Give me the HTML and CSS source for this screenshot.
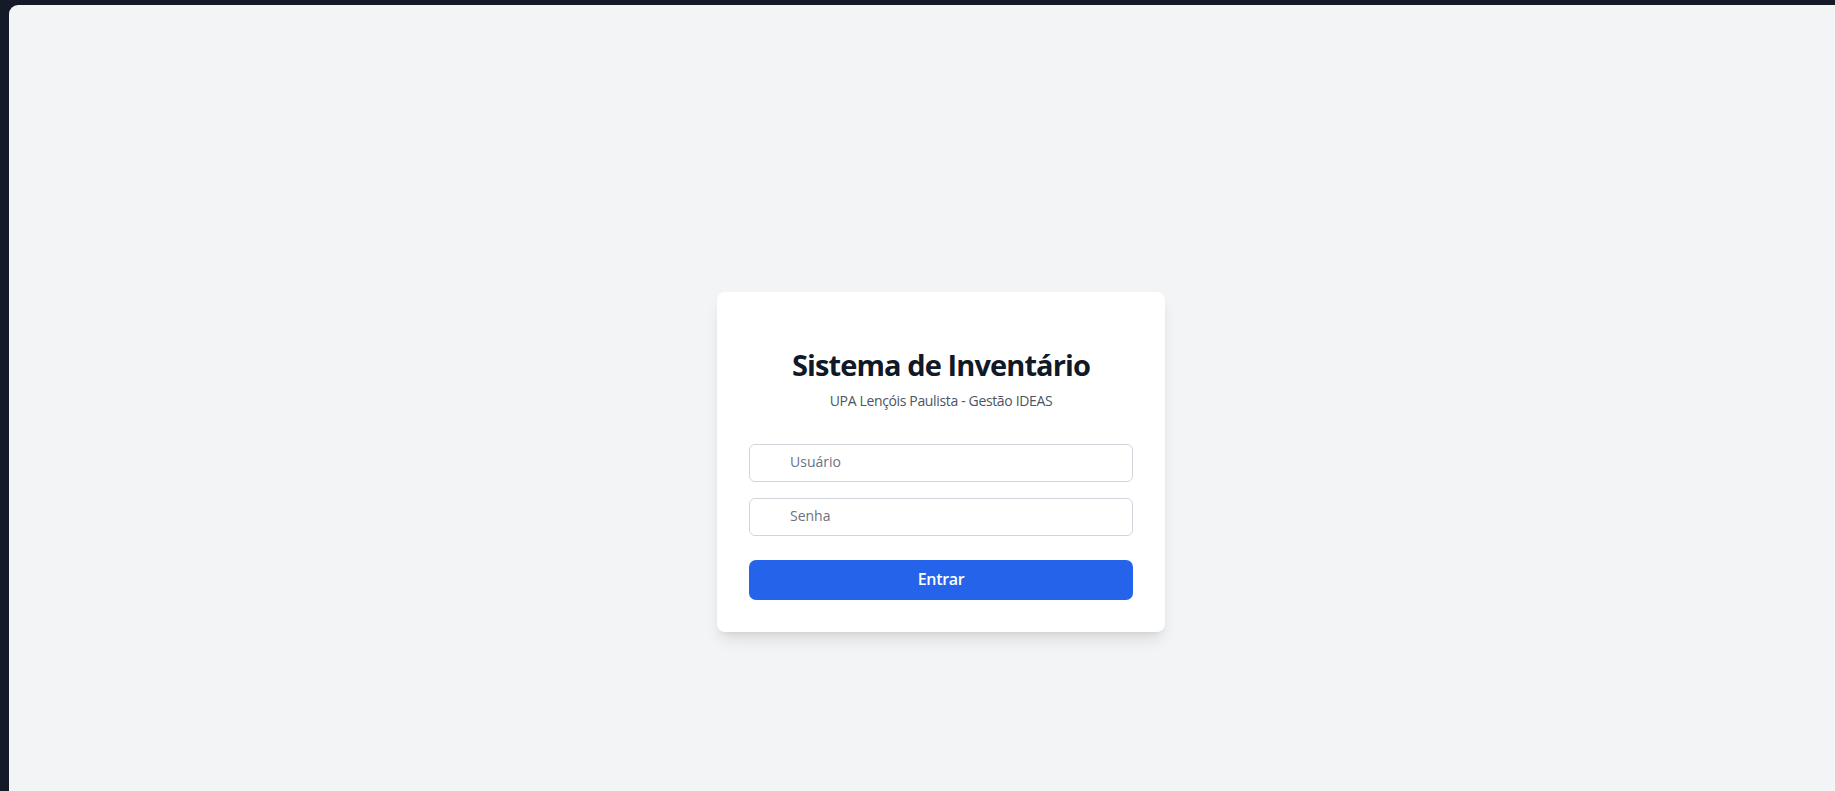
FILE: index.html
```html
<!DOCTYPE html>
<html lang="pt-BR">
<head>
<meta charset="utf-8">
<title>Sistema de Inventário</title>
<link rel="stylesheet" href="styles.css">
</head>
<body>
<div class="frame">
  <main class="panel">
    <div class="card">
      <header class="card-header">
        <h1 class="title">Sistema de Inventário</h1>
        <p class="subtitle">UPA Lençóis Paulista - Gestão IDEAS</p>
      </header>
      <form class="form">
        <div class="field"><input class="input" type="text" placeholder="Usuário"></div>
        <div class="field"><input class="input" type="password" placeholder="Senha"></div>
        <button class="btn" type="button">Entrar</button>
      </form>
    </div>
  </main>
</div>
</body>
</html>
```
FILE: styles.css
```css
* { box-sizing: border-box; }
html, body { margin: 0; padding: 0; }
body {
  background: #151a28;
  font-family: "Open Sans", "Noto Sans", sans-serif;
  overflow: hidden;
}
.frame {
  width: 1835px;
  height: 791px;
  padding: 5px 0 0 9px;
}
.panel {
  background: #f3f4f6;
  height: 786px;
  border-top-left-radius: 9px;
  padding: 287px 0 0 708px;
}
.card {
  width: 448px;
  background: #ffffff;
  border-radius: 8px;
  padding: 32px;
  box-shadow: 0 10px 15px -3px rgba(0,0,0,0.10), 0 4px 6px -4px rgba(0,0,0,0.10);
}
.card-header {
  text-align: center;
  padding-top: 23px;
  margin-bottom: 33px;
}
.title {
  margin: 0;
  font-size: 29px;
  line-height: 36px;
  font-weight: 700;
  color: #111827;
  letter-spacing: -0.9px;
}
.subtitle {
  margin: 8px 0 0;
  font-size: 14px;
  line-height: 20px;
  color: #4b5563;
  letter-spacing: -0.35px;
}
.form {
  display: flex;
  flex-direction: column;
}
.field + .field { margin-top: 16px; }
.input {
  display: block;
  width: 100%;
  height: 38px;
  border: 1px solid #d1d5db;
  border-radius: 6px;
  padding: 0 12px 3px 40px;
  font-family: inherit;
  font-size: 14px;
  color: #111827;
  background: #fff;
  outline: none;
}
.input::placeholder { color: #6b7280; opacity: 1; }
.btn {
  margin-top: 24px;
  height: 40px;
  width: 100%;
  border: none;
  border-radius: 7px;
  background: #2563eb;
  color: #ffffff;
  font-family: inherit;
  font-size: 16px;
  font-weight: 600;
  letter-spacing: -0.3px;
  padding: 0 0 2px;
}
```
